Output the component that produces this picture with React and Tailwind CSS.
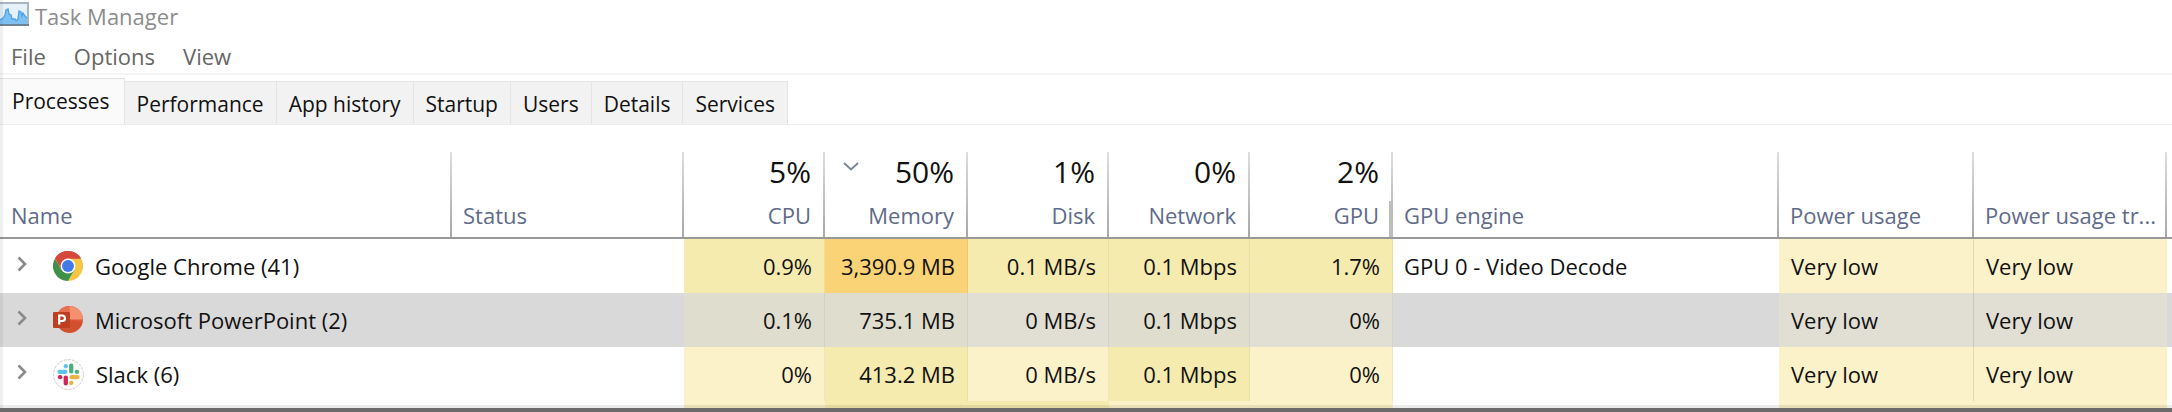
import { useState } from "react";

const LIGHT = "bg-[#fcf2c9]";
const WARM = "bg-[#f5ebae]";
const HOT = "bg-[#f9d376]";
const SEL_LIGHT = "bg-[#e1dfd4]";
const SEL_WARM = "bg-[#dfddcd]";

function TaskManagerIcon() {
  return (
    <svg viewBox="0 0 29 24" className="h-6 w-[29px]" aria-hidden="true">
      <rect x="-2" y="1" width="30" height="22" fill="#e6f0f8" stroke="#a9b7c4" strokeWidth="2" />
      <path d="M0 18 L3 16 L5 13 L6 8 L8 7 L9 12 L11 13 L12 17 L15 17 L16 19 L18 17 L19 9 L21 10 L22 14 L23 11 L25 14 L27 16 V22 H0 Z" fill="#7fc0f2" />
      <path d="M0 18 L3 16 L5 13 L6 8 L8 7 L9 12 L11 13 L12 17 L15 17 L16 19 L18 17 L19 9 L21 10 L22 14 L23 11 L25 14 L27 16" fill="none" stroke="#4aa3e6" strokeWidth="1.3" />
      <path d="M-2 23 H29" stroke="#6f8496" strokeWidth="2" />
    </svg>
  );
}

function ChromeIcon() {
  return (
    <svg viewBox="0 0 48 48" className="size-[30px] shrink-0" aria-hidden="true">
      <path d="M24 24 L3.2 12 A24 24 0 0 1 44.8 12 Z" fill="#d5483a" />
      <path d="M24 12 H44.8 A24 24 0 0 1 24 48 L34.4 30 Z" fill="#f6c643" />
      <path d="M13.6 30 L3.2 12 A24 24 0 0 0 24 48 L34.4 30 Z" fill="#3f9149" />
      <path d="M3.2 12 L13.6 30 L24 12 H44.8 A24 24 0 0 0 3.2 12 Z" fill="#d5483a" />
      <circle cx="24" cy="24" r="12" fill="#fff" />
      <circle cx="24" cy="24" r="9.5" fill="#4079e8" />
    </svg>
  );
}

function PowerPointIcon() {
  return (
    <svg viewBox="0 0 30 30" className="size-[30px] shrink-0" aria-hidden="true">
      <circle cx="16.5" cy="14.5" r="13.5" fill="#d9593a" />
      <path d="M16.5 1 A13.5 13.5 0 0 0 3 14.5 H16.5 Z" fill="#e8704f" />
      <path d="M16.5 1 A13.5 13.5 0 0 1 30 14.5 H16.5 Z" fill="#f5906f" />
      <path d="M3 14.5 A13.5 13.5 0 0 0 29.5 17.5 L16.5 14.5 Z" fill="#d1512f" />
      <rect x="0" y="7" width="17" height="16" rx="1" fill="#bd3f21" />
      <path d="M6.2 19.5 V10.5 H9.2 A2.7 2.7 0 0 1 9.2 16 H6.2" fill="none" stroke="#fff" strokeWidth="2.2" />
    </svg>
  );
}

function SlackIcon() {
  return (
    <svg viewBox="0 0 32 32" className="size-[31px] shrink-0" aria-hidden="true">
      <circle cx="16" cy="16" r="15.4" fill="#fdfdfd" stroke="#c9c9c9" strokeWidth="1" strokeDasharray="3 1.2" />
      <g strokeWidth="4.4" strokeLinecap="round" fill="none">
        <path d="M6.8 13.2 H12.8" stroke="#5cc3ea" />
        <path d="M13.2 7.4 V7.6" stroke="#5cc3ea" />
        <path d="M18.8 6.8 V12.8" stroke="#4fae7c" />
        <path d="M24.8 13.2 H24.6" stroke="#4fae7c" />
        <path d="M25.2 18.8 H19.2" stroke="#e8b443" />
        <path d="M18.8 24.8 V24.6" stroke="#e8b443" />
        <path d="M13.2 25.2 V19.2" stroke="#d0245c" />
        <path d="M7.2 18.8 H7.4" stroke="#d0245c" />
      </g>
    </svg>
  );
}

const tabs = ["Processes", "Performance", "App history", "Startup", "Users", "Details", "Services"];

const columns = [
  { label: "Name", width: "w-[452px]" },
  { label: "Status", width: "w-[232px]" },
  { label: "CPU", total: "5%", width: "w-[141px]" },
  { label: "Memory", total: "50%", width: "w-[143px]", sorted: true },
  { label: "Disk", total: "1%", width: "w-[141px]" },
  { label: "Network", total: "0%", width: "w-[141px]" },
  { label: "GPU", total: "2%", width: "w-[143px]", grip: true },
  { label: "GPU engine", width: "" },
  { label: "Power usage", width: "w-[195px]" },
  { label: "Power usage tr...", width: "w-[193px]" },
];

const rows = [
  {
    name: "Google Chrome (41)",
    Icon: ChromeIcon,
    usage: [["0.9%", WARM], ["3,390.9 MB", HOT], ["0.1 MB/s", WARM], ["0.1 Mbps", WARM], ["1.7%", WARM]],
    engine: "GPU 0 - Video Decode",
    power: LIGHT,
  },
  {
    name: "Microsoft PowerPoint (2)",
    Icon: PowerPointIcon,
    selected: true,
    usage: [["0.1%", SEL_WARM], ["735.1 MB", SEL_WARM], ["0 MB/s", SEL_LIGHT], ["0.1 Mbps", SEL_WARM], ["0%", SEL_LIGHT]],
    engine: "",
    power: SEL_LIGHT,
  },
  {
    name: "Slack (6)",
    Icon: SlackIcon,
    usage: [["0%", LIGHT], ["413.2 MB", WARM], ["0 MB/s", LIGHT], ["0.1 Mbps", WARM], ["0%", LIGHT]],
    engine: "",
    power: LIGHT,
  },
];

const nextRow = ["", "", LIGHT, WARM, WARM, LIGHT, LIGHT, "", LIGHT, LIGHT, ""];

export default function App() {
  const [tab, setTab] = useState("Processes");
  return (
    <div className="relative overflow-hidden border-b-4 border-[#6c6a6a] bg-white font-['Open_Sans','Noto_Sans',sans-serif] text-[22px] leading-7 text-[#111]">
      <header className="flex h-9 items-start gap-1.5 pt-0.5">
        <TaskManagerIcon />
        <h1 className="text-[#8c8c8c]">Task Manager</h1>
      </header>
      <nav className="flex h-[39px] items-center gap-7 border-b-2 border-[#f5f5f5] px-[11px] pt-0.5 text-[#666]">
        <button type="button">File</button>
        <button type="button">Options</button>
        <button type="button">View</button>
      </nav>

      <div role="tablist" className="flex h-[50px] items-end border-b border-[#ececec] text-[21px]">
        {tabs.map((name) => (
          <button
            key={name}
            type="button"
            role="tab"
            aria-selected={tab === name}
            onClick={() => setTab(name)}
            className={
              tab === name
                ? "h-[46px] border-t border-r border-[#e4e4e4] bg-[#fafafa] pr-3.5 pb-0.5 pl-3"
                : "h-[43px] border-t border-r border-[#e4e4e4] bg-[#f2f2f2] px-3 pt-0.5"
            }
          >
            {name}
          </button>
        ))}
      </div>

      <table className="mt-[27px] w-full table-fixed border-separate border-spacing-0">
        <thead>
          <tr className="h-[87px]">
            {columns.map((c) => (
              <th
                key={c.label}
                scope="col"
                aria-sort={c.sorted ? "descending" : undefined}
                className={`${c.width} relative border-b-2 border-[#999] bg-linear-to-b from-[#dedede] to-[#a8a8a8] bg-size-[2px_100%] bg-right bg-no-repeat p-0 pb-2 align-bottom font-normal ${
                  c.total ? "pr-3.5 text-right" : "px-[11px] text-left"
                }`}
              >
                {c.total && (
                  <div className="flex items-start justify-end pb-[11px] text-[30px] leading-9">
                    {c.sorted && (
                      <svg viewBox="0 0 16 10" className="mt-2 mr-auto ml-[18px] h-2.5 w-4" fill="none" stroke="#7b8796" strokeWidth="2" aria-hidden="true">
                        <path d="M1 1 L8 7.5 L15 1" />
                      </svg>
                    )}
                    {c.total}
                  </div>
                )}
                <div className="whitespace-nowrap text-[#5f6b8a]">{c.label}</div>
                {c.grip && <span className="absolute right-0 bottom-0 h-9 w-1 bg-[#bdbdbd]" />}
              </th>
            ))}
            <th className="w-[5px] border-b-2 border-[#999] p-0" aria-hidden="true" />
          </tr>
        </thead>
        <tbody>
          {rows.map(({ name, Icon, selected, usage, engine, power }) => (
            <tr key={name} className={selected ? "h-[54px] bg-[#d9d9d9]" : "h-[54px]"}>
              <td className="p-0">
                <div className="flex items-center pl-[17px]">
                  <button type="button" aria-label={`Expand ${name}`} className="mr-[26px] pb-1">
                    <svg viewBox="0 0 10 16" className="h-4 w-2.5" fill="none" stroke="#8a8a8a" strokeWidth="2.6" aria-hidden="true">
                      <path d="M1.5 1.5 L8 8 L1.5 14.5" />
                    </svg>
                  </button>
                  <Icon />
                  <span className="pl-3">{name}</span>
                </div>
              </td>
              <td className="p-0" />
              {usage.map(([value, tone], i) => (
                <td key={i} className={`border-r border-black/5 p-0 pr-3 text-right ${tone}`}>
                  {value}
                </td>
              ))}
              <td className="p-0 pl-[11px]">{engine}</td>
              <td className={`border-r border-black/10 p-0 pl-3 ${power}`}>Very low</td>
              <td className={`p-0 pl-3 ${power}`}>Very low</td>
              <td className="p-0" />
            </tr>
          ))}
          <tr className="h-[7px]" aria-hidden="true">
            {nextRow.map((tone, i) => (
              <td key={i} className={`border-b-3 border-black/8 p-0 ${tone}`} />
            ))}
          </tr>
        </tbody>
      </table>
      <div className="pointer-events-none absolute inset-y-0 left-0 w-[3px] bg-black/6" />
    </div>
  );
}
